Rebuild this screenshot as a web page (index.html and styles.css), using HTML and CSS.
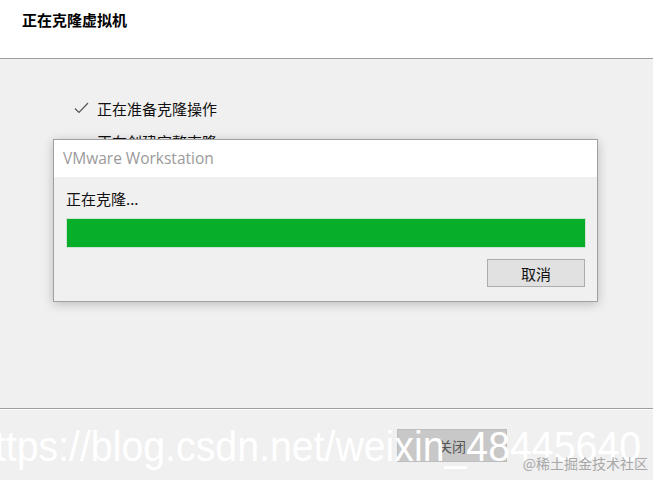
FILE: index.html
```html
<!DOCTYPE html>
<html lang="zh-CN">
  <head>
    <meta charset="UTF-8" />
    <meta name="viewport" content="width=device-width, initial-scale=1.0" />
    <title>正在克隆虚拟机</title>
    <link rel="stylesheet" href="styles.css">
  </head>
  <body>
    <div class="header">
      <h1 class="title">正在克隆虚拟机</h1>
    </div>

    <!-- Clone steps -->
    <div class="content">
      <div class="step">
        <svg class="check" width="15" height="12" viewBox="0 0 15 12">
          <path d="M1 6.5 L5 10.5 L14 1" fill="none" stroke="#555" stroke-width="1.2" />
        </svg>
        <span>正在准备克隆操作</span>
      </div>
      <div class="step">
        <span class="check"></span>
        <span>正在创建完整克隆</span>
      </div>
    </div>

    <div class="footer">
      <button class="close-btn" disabled>关闭</button>
    </div>

    <!-- Progress popup -->
    <div class="dialog">
      <div class="dialog-title">VMware Workstation</div>
      <div class="dialog-body">
        <p class="dialog-text">正在克隆...</p>
        <div class="progress">
          <div class="progress-fill" style="width: 100%"></div>
        </div>
        <div class="dialog-actions">
          <button class="cancel-btn">取消</button>
        </div>
      </div>
    </div>

    <div class="watermark">https://blog.csdn.net/weixin_48445640</div>
    <div class="credit">@稀土掘金技术社区</div>
  </body>
</html>
```

FILE: styles.css
```css
body {
  font-family: "Noto Sans CJK SC", "Liberation Sans", sans-serif;
  background-color: #f0f0f0;
  margin: 0;
  padding: 0;
  width: 653px;
  height: 480px;
  overflow: hidden;
  position: relative;
  color: #111;
}

.header {
  height: 58px;
  background-color: #fff;
  border-bottom: 1px solid #a0a0a0;
  padding-left: 22px;
  box-sizing: content-box;
}

.title {
  margin: 0;
  padding-top: 10px;
  font-size: 15px;
  line-height: 20px;
  font-weight: bold;
  color: #000;
}

.content {
  height: 311px;
  padding: 38px 0 0 74px;
  display: flex;
  flex-direction: column;
  gap: 11px;
}

.step {
  display: flex;
  align-items: center;
  height: 22px;
  font-size: 15px;
  color: #111;
}

.check {
  width: 15px;
  margin-right: 8px;
  display: inline-block;
}

.footer {
  border-top: 1px solid #a0a0a0;
  box-shadow: inset 0 1px 0 #fff;
  height: 71px;
  display: flex;
  justify-content: flex-end;
  padding: 20px 146px 0 0;
  box-sizing: border-box;
}

.close-btn {
  width: 110px;
  height: 33px;
  background-color: #c8c8c8;
  border: 1px solid #bdbdbd;
  color: #555;
  font-family: inherit;
  font-size: 14px;
  padding: 0;
}

.dialog {
  position: absolute;
  left: 53px;
  top: 139px;
  width: 545px;
  box-sizing: border-box;
  border: 1px solid #a0a0a0;
  background-color: #f0f0f0;
  box-shadow: 0 2px 10px rgba(0, 0, 0, 0.22);
}

.dialog-title {
  height: 37px;
  line-height: 37px;
  padding-left: 9px;
  background-color: #fff;
  font-family: "Open Sans", "Liberation Sans", sans-serif;
  font-size: 15.5px;
  color: #9a9a9a;
}

.dialog-body {
  padding: 12px 11px 14px 12px;
}

.dialog-text {
  margin: 0 0 9px 0;
  font-size: 15px;
  line-height: 20px;
  color: #111;
}

.progress {
  height: 30px;
  box-sizing: border-box;
  border: 1px solid #cfe3d2;
  background-color: #e6e6e6;
}

.progress-fill {
  height: 100%;
  background-color: #06ae2a;
}

.dialog-actions {
  display: flex;
  justify-content: flex-end;
  margin-top: 11px;
}

.cancel-btn {
  width: 98px;
  height: 28px;
  margin-right: 1px;
  background-color: #e1e1e1;
  border: 1px solid #adadad;
  font-family: inherit;
  font-size: 15px;
  color: #111;
  padding: 0;
}

.watermark {
  position: absolute;
  left: -27px;
  top: 426px;
  font-family: "Liberation Sans", Arial, sans-serif;
  font-size: 42px;
  line-height: 42px;
  color: #fff;
  white-space: nowrap;
  transform: scaleX(0.935);
  transform-origin: left top;
}

.credit {
  position: absolute;
  right: 5px;
  top: 453px;
  font-size: 14px;
  line-height: 20px;
  color: #a8a8a8;
}
```
